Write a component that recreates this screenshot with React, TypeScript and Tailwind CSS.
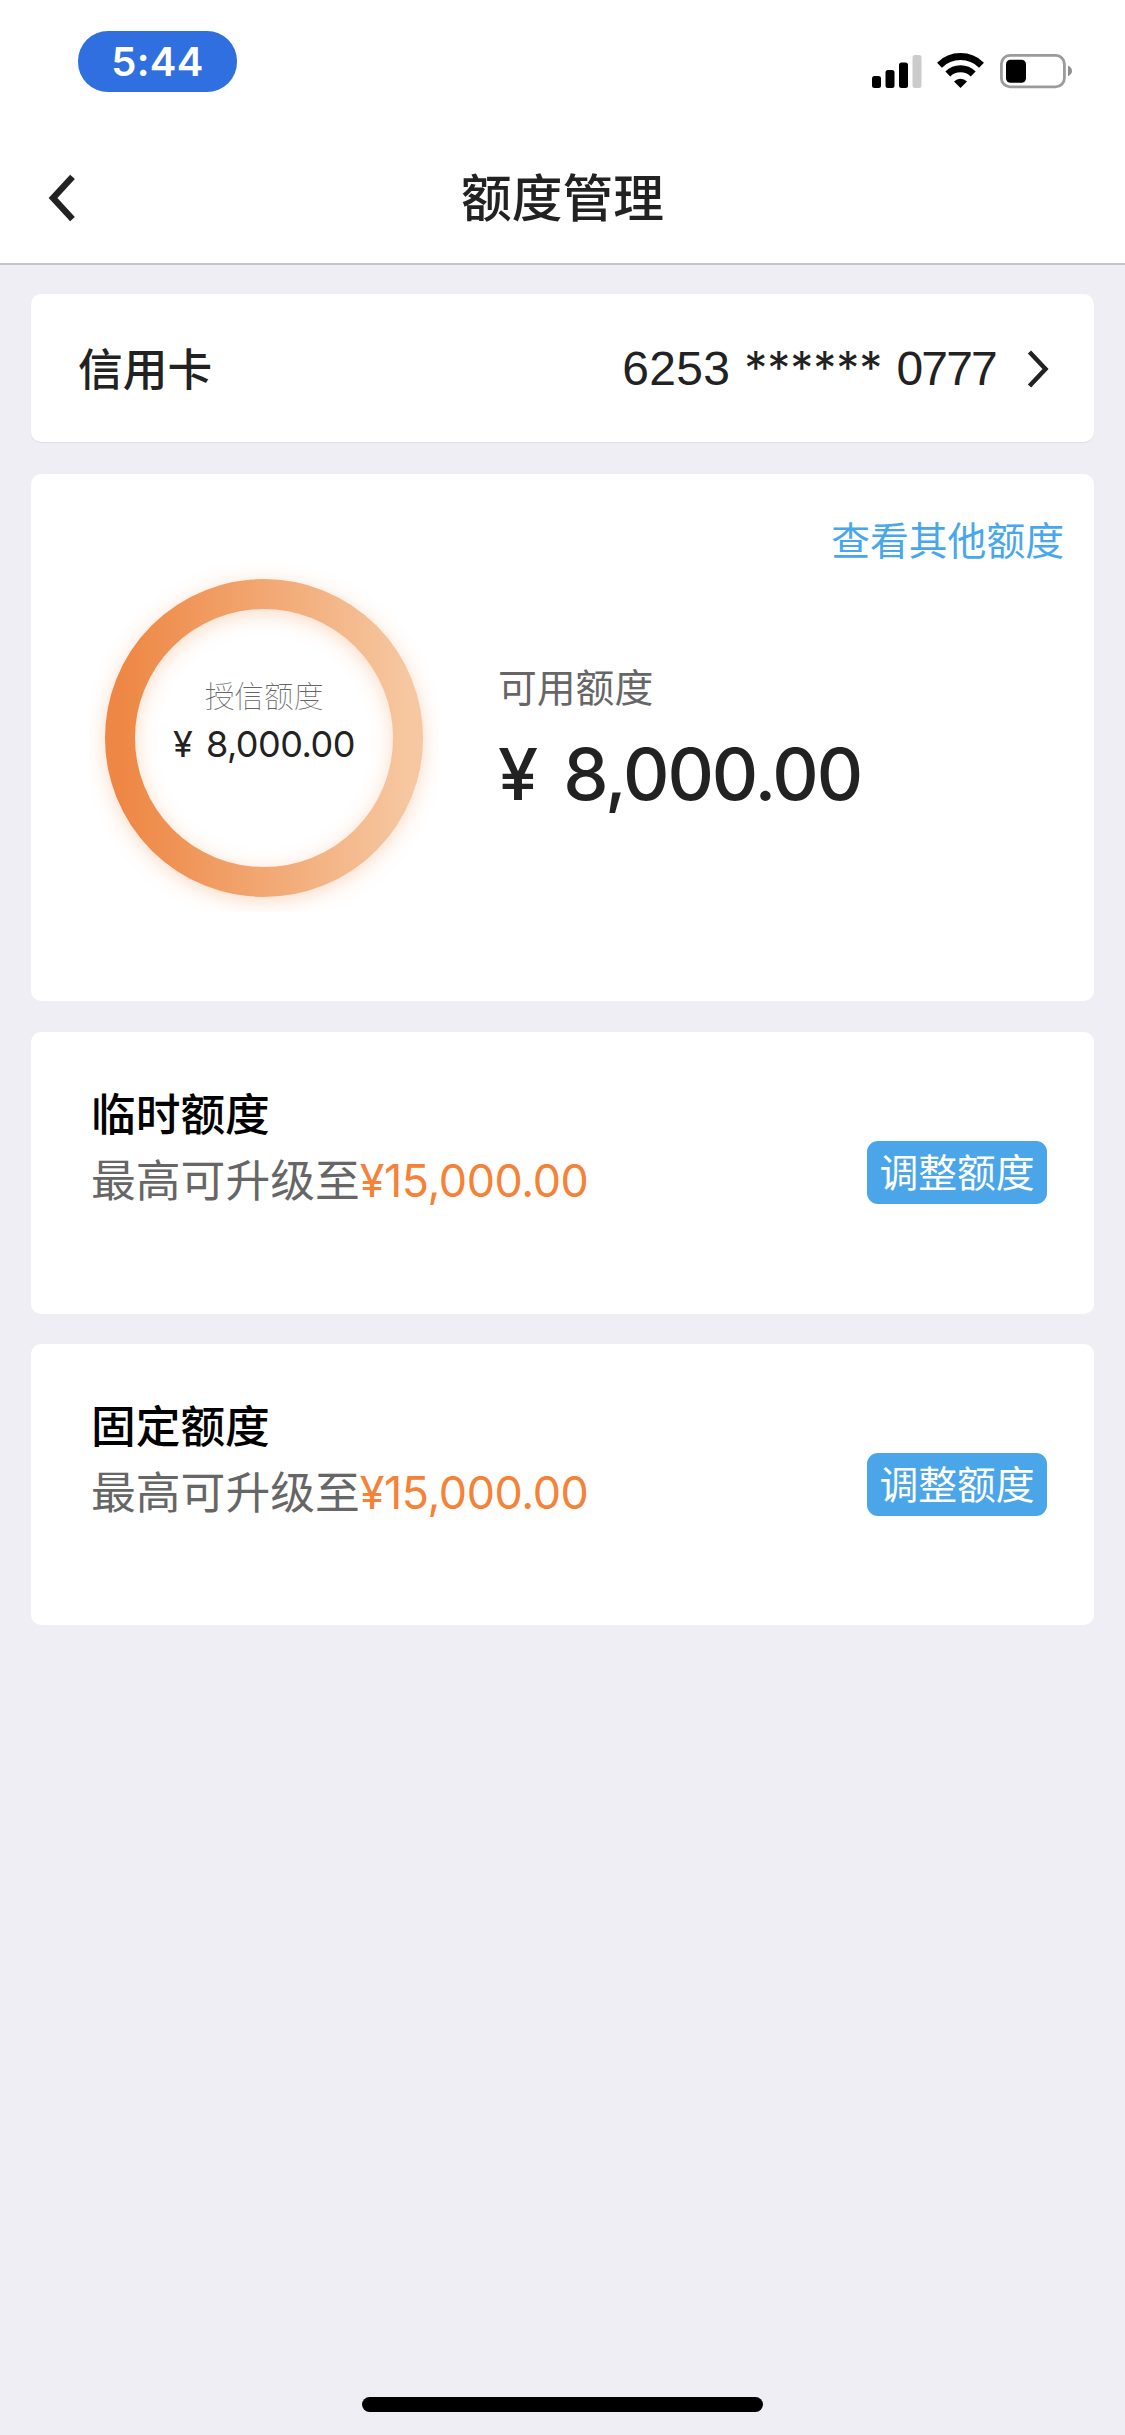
type Quota = {
  title: string;
  max: string;
};

const quotas: Quota[] = [
  { title: "临时额度", max: "¥15,000.00" },
  { title: "固定额度", max: "¥15,000.00" },
];

function StatusIcons() {
  return (
    <svg width="201" height="36" viewBox="0 0 201 36" className="mt-[53px]">
      <rect x="0" y="23" width="9" height="12" rx="2.5" fill="#000" />
      <rect x="13.5" y="17" width="9" height="18" rx="2.5" fill="#000" />
      <rect x="27" y="9.5" width="9" height="25.5" rx="2.5" fill="#000" />
      <rect x="40.5" y="2" width="9" height="33" rx="2.5" fill="#cbcbcb" />
      <g fill="none" stroke="#000" strokeWidth="7">
        <path d="M67.5 12.2a30 30 0 0 1 42 0" />
        <path d="M75.8 21a18.2 18.2 0 0 1 25.4 0" />
      </g>
      <path d="M88.5 35l-6.5-6.6a9.4 9.4 0 0 1 13 0z" fill="#000" />
      <rect x="129.4" y="2.4" width="63" height="31.4" rx="8.5" fill="none" stroke="#9b9b9b" strokeWidth="2.8" />
      <rect x="134" y="6.8" width="20" height="23" rx="4.5" fill="#000" />
      <path d="M196 12.8c2.4.9 4 2.9 4 5.2s-1.6 4.3-4 5.2z" fill="#8f8f8f" />
    </svg>
  );
}

function Header() {
  return (
    <header className="flex h-[265px] flex-col border-b-2 border-[#c6c6ca] bg-white">
      <div className="flex h-[131px] items-start justify-between pr-[52px] pl-[78px]">
        <div className="mt-[31px] flex h-[61px] w-[159px] items-center justify-center rounded-[30px] bg-[#2f6fdf] text-[40px] leading-none font-semibold tracking-[0.3px] text-white">
          5:44
        </div>
        <StatusIcons />
      </div>
      <div className="grid flex-1 grid-cols-[1fr_auto_1fr] items-center">
        <button type="button" aria-label="返回" className="pt-[2px] pl-[48px]">
          <svg width="28" height="48" viewBox="0 0 28 48" fill="none" stroke="#222" strokeWidth="6.4">
            <path d="M24.5 2.8 5 24l19.5 21.2" />
          </svg>
        </button>
        <h1 className="pt-[5px] text-[50.7px] leading-none font-medium">额度管理</h1>
      </div>
    </header>
  );
}

function CreditRing() {
  return (
    <div className="grid size-[350px] place-items-center">
      <svg width="350" height="350" viewBox="0 0 350 350" className="col-start-1 row-start-1">
        <defs>
          <linearGradient id="ring" x1="0" x2="1" y1="0" y2="0">
            <stop offset="0" stopColor="#ee8744" />
            <stop offset="1" stopColor="#f6c7a0" />
          </linearGradient>
          <filter id="glow" filterUnits="userSpaceOnUse" x="0" y="0" width="350" height="350">
            <feDropShadow dx="0" dy="4" stdDeviation="10" floodColor="#f08a48" floodOpacity="0.32" />
          </filter>
        </defs>
        <circle cx="175" cy="176" r="144" fill="none" stroke="url(#ring)" strokeWidth="30" filter="url(#glow)" />
      </svg>
      <div className="col-start-1 row-start-1 mb-[34px] flex flex-col items-center">
        <span className="text-[29.7px] leading-[36px] font-thin text-[#666]">授信额度</span>
        <span className="mt-[12px] text-[36px] leading-[36px] tracking-[-0.5px] [word-spacing:4px]">¥ 8,000.00</span>
      </div>
    </div>
  );
}

function QuotaCard({ quota }: { quota: Quota }) {
  return (
    <section className="flex h-[281.5px] items-start justify-between rounded-[10px] bg-white pr-[47px] pl-[60px]">
      <div className="mt-[58px]">
        <h2 className="text-[44.7px] leading-[50px] font-medium text-black">{quota.title}</h2>
        <p className="mt-[16px] text-[44.8px] leading-[50px] text-[#666]">
          最高可升级至<span className="tracking-[-0.4px] text-[#f58236]">{quota.max}</span>
        </p>
      </div>
      <button
        type="button"
        className="mt-[109px] h-[63px] w-[180px] rounded-[11px] bg-[#4aa6e8] text-[38.8px] leading-[61px] text-white"
      >
        调整额度
      </button>
    </section>
  );
}

export default function App() {
  return (
    <div className="flex min-h-[2435px] w-[1125px] flex-col bg-[#efeef4] font-['Inter','Noto_Sans_CJK_SC',sans-serif] text-[#222]">
      <Header />
      <main className="flex flex-1 flex-col px-[31px] pt-[29px]">
        <section className="flex h-[148px] items-center justify-between rounded-[10px] bg-white pr-[44px] pl-[47px] shadow-[0_1px_1px_#dedde3]">
          <h2 className="pt-[4px] text-[44.7px] leading-none font-medium">信用卡</h2>
          <div className="flex items-center pt-[2px] leading-none">
            <div className="flex items-baseline font-['Liberation_Sans',sans-serif] text-[48px]">
              <span className="tracking-[0.3px]">6253</span>
              <span className="ml-[14px] font-['Inter',sans-serif] text-[46px]">******</span>
              <span className="ml-[14px] tracking-[-1.8px]">0777</span>
            </div>
            <svg width="24" height="38" viewBox="0 0 24 38" fill="none" stroke="#222" strokeWidth="4.5" className="ml-[30px]">
              <path d="M3.5 2 19.5 19l-16 17" />
            </svg>
          </div>
        </section>

        <section className="mt-[32px] flex h-[527px] flex-col rounded-[10px] bg-white">
          <a className="mt-[46px] mr-[30px] self-end text-[38.8px] leading-[42px] text-[#48a7ec]">查看其他额度</a>
          <div className="flex pl-[58px]">
            <CreditRing />
            <div className="mt-[105px] ml-[59px]">
              <p className="text-[38.8px] leading-[42px] text-[#666]">可用额度</p>
              <p className="mt-[29px] text-[72px] leading-[72px] font-medium tracking-[-2px] [word-spacing:10px]">
                ¥ 8,000.00
              </p>
            </div>
          </div>
        </section>

        <div className="mt-[31px] flex flex-col gap-[30px]">
          {quotas.map((quota) => (
            <QuotaCard key={quota.title} quota={quota} />
          ))}
        </div>
      </main>
      <div className="mb-[23px] h-[15px] w-[401px] self-center rounded-full bg-black" />
    </div>
  );
}
